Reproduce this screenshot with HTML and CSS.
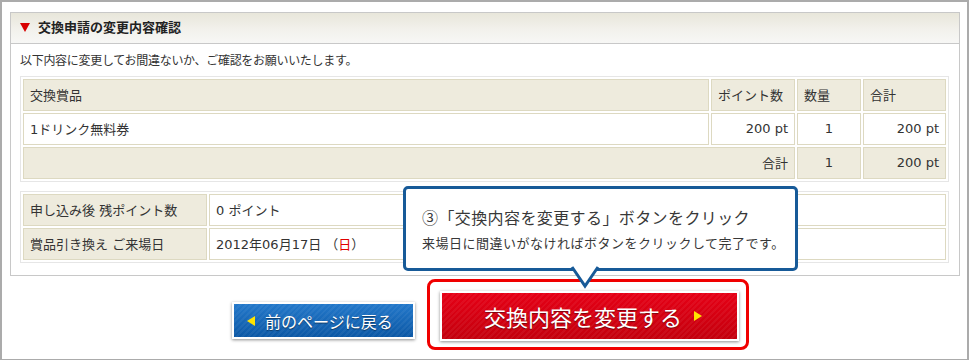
FILE: index.html
```html
<!DOCTYPE html>
<html lang="ja">
<head>
  <meta charset="UTF-8">
  <title>交換申請の変更内容確認</title>
  <link rel="stylesheet" href="styles.css">
</head>
<body>
  <div class="frame">

    <!-- confirmation panel -->
    <section class="panel">
      <h2 class="panel-head"><span class="tri"></span>交換申請の変更内容確認</h2>
      <div class="panel-body">
        <p class="lead">以下内容に変更してお間違ないか、ご確認をお願いいたします。</p>

        <table class="grid items">
          <tr class="head">
            <td>交換賞品</td>
            <td class="c-pt">ポイント数</td>
            <td class="c-qty">数量</td>
            <td class="c-sum">合計</td>
          </tr>
          <tr>
            <td>1ドリンク無料券</td>
            <td class="num">200 pt</td>
            <td class="mid">1</td>
            <td class="num">200 pt</td>
          </tr>
          <tr class="head">
            <td colspan="2" class="num">合計</td>
            <td class="mid">1</td>
            <td class="num">200 pt</td>
          </tr>
        </table>

        <table class="grid info">
          <tr>
            <th>申し込み後 残ポイント数</th>
            <td>0 ポイント</td>
          </tr>
          <tr>
            <th>賞品引き換え ご来場日</th>
            <td>2012年06月17日 （<span class="sun">日</span>）</td>
          </tr>
        </table>
      </div>
    </section>

    <!-- buttons -->
    <div class="actions">
      <a href="#" class="btn btn-back"><span class="arr-l"></span>前のページに戻る</a>
      <div class="submit-ring">
        <a href="#" class="btn btn-submit">交換内容を変更する<span class="arr-r"></span></a>
      </div>
    </div>

    <!-- guide balloon -->
    <div class="callout">
      <p class="c-title">③「交換内容を変更する」ボタンをクリック</p>
      <p class="c-text">来場日に間違いがなければボタンをクリックして完了です。</p>
      <svg class="tail" width="26" height="21" viewBox="0 0 26 21">
        <polygon points="0,0 26,0 13,19" fill="#fff"/>
        <polyline points="0,-1 13,18 26,-1" fill="none" stroke="#175a98" stroke-width="3"/>
      </svg>
    </div>

  </div>
</body>
</html>
```

FILE: styles.css
```css
* { box-sizing: border-box; }
body {
  margin: 0;
  font-family: "DejaVu Sans", "Noto Sans CJK JP", sans-serif;
  color: #333;
  background: #fff;
}
.frame {
  position: relative;
  width: 969px;
  height: 360px;
  border: 2px solid #ababab;
  border-bottom-width: 1px;
}

/* panel */
.panel {
  margin: 10px 0 0 8px;
  width: 950px;
  border: 1px solid #c8c8c8;
}
.panel-head {
  display: flex;
  align-items: center;
  gap: 8px;
  height: 31px;
  margin: 0;
  padding: 0 0 3px 9px;
  border-bottom: 1px solid #c8c8c8;
  background: linear-gradient(#e8e6da, #f2f1ec 55%, #f7f7f5);
  font-family: "Noto Sans CJK JP", sans-serif;
  font-size: 13px;
  font-weight: bold;
  color: #222;
}
.tri {
  width: 0;
  height: 0;
  margin-top: 2px;
  border-left: 5px solid transparent;
  border-right: 5px solid transparent;
  border-top: 9px solid #d80000;
}
.panel-body { padding: 8px 10px 12px 9px; }
.lead {
  margin: 0;
  font-family: "Noto Sans CJK JP", sans-serif;
  font-size: 12px;
  line-height: 16px;
  letter-spacing: -0.3px;
}

/* tables */
.grid {
  width: 929px;
  border: 1px solid #e6e6e6;
  border-spacing: 2px;
  margin-top: 8px;
  font-size: 13px;
}
.grid td, .grid th {
  height: 32px;
  padding: 0 6px 2px;
  border: 1px solid #ddd9c1;
  text-align: left;
  font-weight: normal;
  white-space: nowrap;
}
.grid .head td, .grid th { background: #eeebdd; }
.items .c-pt { width: 84px; }
.items .c-qty { width: 64px; }
.items .c-sum { width: 83px; }
.grid .num { text-align: right; }
.grid .mid { text-align: center; }
.info { margin-top: 9px; }
.info th { width: 184px; }
.sun { color: #e00000; }

/* buttons */
.actions {
  display: flex;
  align-items: flex-start;
  gap: 12px;
  padding: 3px 0 0 230px;
}
.btn {
  display: flex;
  align-items: center;
  color: #fff;
  text-decoration: none;
  font-family: "Noto Sans CJK JP", sans-serif;
  border: 2px solid #fff;
  box-shadow: 0 1px 3px rgba(0,0,0,.45);
  text-shadow: 0 1px 1px rgba(0,0,0,.45);
}
.btn-back {
  margin-top: 23px;
  width: 183px;
  height: 37px;
  padding-left: 13px;
  gap: 10px;
  font-size: 16px;
  background:
    repeating-linear-gradient(135deg, rgba(255,255,255,.05) 0 2px, transparent 2px 4px),
    linear-gradient(#2378ca, #0c58a5);
}
.arr-l {
  width: 0;
  height: 0;
  border-top: 5px solid transparent;
  border-bottom: 5px solid transparent;
  border-right: 8px solid #ffe400;
}
.submit-ring {
  width: 322px;
  height: 71px;
  padding: 9px 8px 7px 10px;
  border: 3px solid #f00000;
  border-radius: 8px;
}
.btn-submit {
  width: 299px;
  height: 50px;
  padding-left: 42px;
  gap: 12px;
  font-size: 22px;
  background:
    repeating-linear-gradient(135deg, rgba(255,255,255,.05) 0 2px, transparent 2px 4px),
    linear-gradient(#e60016, #c3000d);
}
.arr-r {
  width: 0;
  height: 0;
  border-top: 5px solid transparent;
  border-bottom: 5px solid transparent;
  border-left: 8px solid #ffe400;
}

/* balloon */
.callout {
  position: absolute;
  left: 401px;
  top: 184px;
  width: 395px;
  height: 85px;
  padding: 16px 0 0 16px;
  background: #fff;
  border: 3px solid #175a98;
  border-radius: 5px;
  font-family: "Noto Sans CJK JP", sans-serif;
  color: #383838;
}
.callout p { margin: 0; }
.c-title {
  font-size: 16px;
  line-height: 24px;
  letter-spacing: 0.4px;
}
.c-text {
  margin-top: 5px !important;
  font-size: 13px;
  line-height: 18px;
  letter-spacing: 0.5px;
}
.tail {
  position: absolute;
  left: 166px;
  bottom: -21px;
  overflow: visible;
}
```
